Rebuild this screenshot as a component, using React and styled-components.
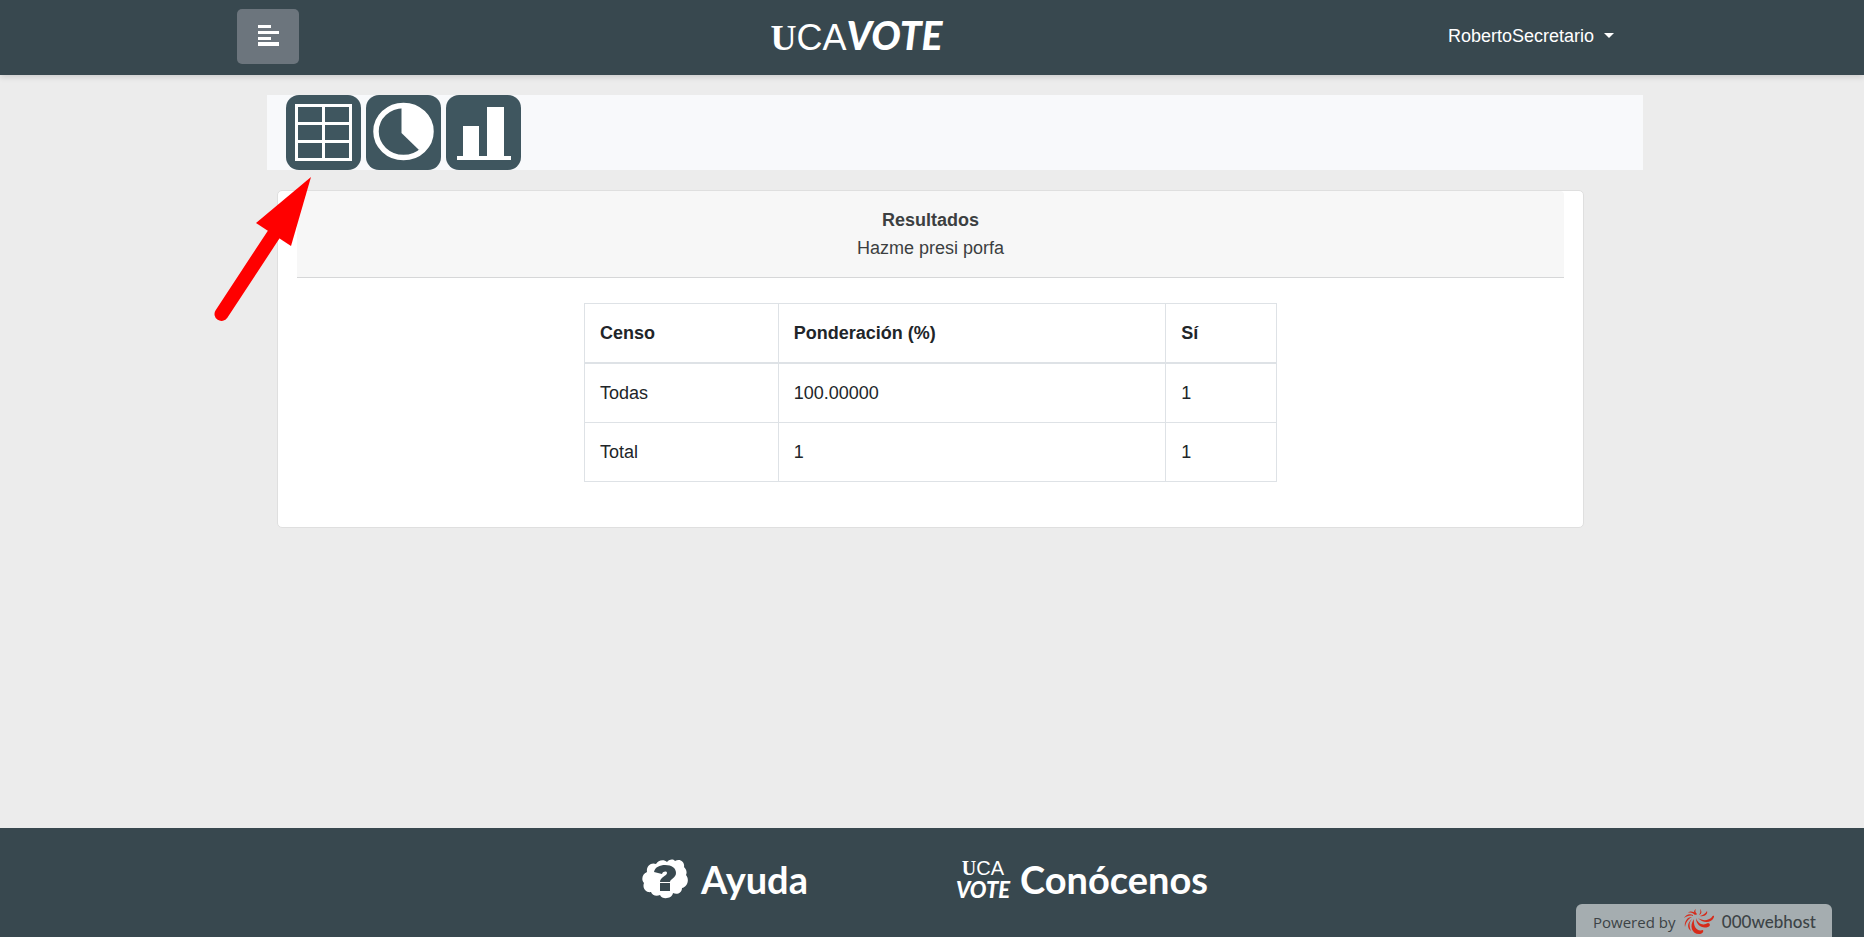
import React from "react";
import styled, { createGlobalStyle } from "styled-components";

const GlobalStyle = createGlobalStyle`
  *, *::before, *::after { box-sizing: border-box; }
  body {
    margin: 0;
    background: #ececec;
    color: #212529;
    font-family: "Liberation Sans", Arial, sans-serif;
    font-size: 18px;
    line-height: 28px;
  }
`;

const Page = styled.div`
  display: flex;
  flex-direction: column;
  min-height: 100vh;
  position: relative;
`;

const Header = styled.header`
  display: flex;
  align-items: center;
  justify-content: space-between;
  height: 75px;
  padding: 0 250px 0 237px;
  background: #38484f;
  box-shadow: 0 2px 6px rgba(0, 0, 0, 0.14);

  @media (max-width: 1200px) {
    padding: 0 24px;
  }
`;

const MenuButton = styled.button`
  display: flex;
  align-items: center;
  justify-content: center;
  width: 62px;
  height: 55px;
  margin-bottom: 2px;
  padding: 0 0 2px;
  border: 0;
  border-radius: 5px;
  background: #6c757d;
  color: #fff;
  cursor: pointer;
`;

const Brand = styled.a`
  display: flex;
  align-items: baseline;
  height: 44px;
  line-height: 44px;
  margin: 0 34px 6px 0;
  color: #fff;
  text-decoration: none;
`;

const SerifLetter = styled.span`
  font-family: "Liberation Serif", serif;
  font-size: ${(p) => p.$size}px;
  font-weight: 700;
`;

const ThinLetters = styled.span`
  font-family: "Liberation Sans", sans-serif;
  font-size: ${(p) => p.$size}px;
`;

const BrushLetters = styled.span`
  font-family: Lato, sans-serif;
  font-size: ${(p) => p.$size}px;
  font-style: italic;
  font-weight: 900;
`;

const UserMenu = styled.button`
  display: flex;
  align-items: center;
  gap: 10px;
  margin-bottom: 4px;
  padding: 0;
  border: 0;
  background: none;
  color: #fff;
  font: inherit;
  cursor: pointer;
`;

const Caret = styled.span`
  border: 5px solid transparent;
  border-top-color: #fff;
  border-bottom: 0;
`;

const Main = styled.main`
  flex: 1;
  padding: 20px 221px 40px 267px;

  @media (max-width: 1200px) {
    padding: 20px 24px 40px;
  }
`;

const ViewBar = styled.nav`
  display: flex;
  gap: 5px;
  padding-left: 19px;
  background: #f8f9fb;
`;

const ViewButton = styled.button`
  width: 75px;
  height: 75px;
  padding: 0;
  border: 0;
  border-radius: 13px;
  background: #3f565f;
  color: #fff;
  cursor: pointer;

  svg { display: block; }
`;

const Card = styled.section`
  margin: 20px 59px 0 10px;
  padding: 0 19px 45px;
  border: 1px solid #dfdfdf;
  border-radius: 5px;
  background: #fff;
`;

const CardHeader = styled.div`
  padding: 15px;
  border-bottom: 1px solid #d6d7d8;
  border-radius: 4px 4px 0 0;
  background: #f7f7f7;
  color: #3c3f41;
  text-align: center;
`;

const Title = styled.h1`
  margin: 0;
  font: inherit;
  font-weight: 700;
`;

const Subtitle = styled.p`
  margin: 0;
`;

const ResultsTable = styled.table`
  width: 693px;
  max-width: 100%;
  margin: 25px auto 0;
  border-collapse: collapse;
`;

const Column = styled.col`
  width: ${(p) => p.$share}%;
`;

const HeadCell = styled.th`
  padding: 15px;
  border: 1px solid #dee2e6;
  border-bottom-width: 2px;
  text-align: left;
`;

const Cell = styled.td`
  padding: 15px;
  border: 1px solid #dee2e6;
`;

const Footer = styled.footer`
  display: flex;
  flex-wrap: wrap;
  justify-content: center;
  gap: 0 147px;
  min-height: 109px;
  padding: 29px 14px 36px 0;
  background: #38484f;
`;

const FooterLink = styled.a`
  display: flex;
  align-items: center;
  gap: ${(p) => p.$gap}px;
  height: 44px;
  color: #fff;
  font-family: Lato, sans-serif;
  font-size: 38px;
  font-weight: 700;
  line-height: 44px;
  text-decoration: none;
`;

const StackedLogo = styled.span`
  display: flex;
  flex-direction: column;
  align-items: center;
  width: 56px;
  font-size: 20px;
  font-weight: 400;
`;

const LogoLine = styled.span`
  display: flex;
  align-items: baseline;
  height: 22px;
  line-height: 22px;
`;

const HostBadge = styled.a`
  position: fixed;
  right: 32px;
  bottom: 0;
  display: flex;
  align-items: center;
  justify-content: space-between;
  width: 256px;
  height: 33px;
  padding: 3px 16px 0 17px;
  border-radius: 6px 6px 0 0;
  background: #a5adb0;
  color: #3c4346;
  font-family: "Open Sans", sans-serif;
  font-size: 15px;
  line-height: 24px;
  text-decoration: none;
  white-space: nowrap;
`;

const HostName = styled.span`
  font-family: Lato, sans-serif;
  font-size: 17px;
  font-weight: 500;
`;

const Pointer = styled.svg`
  position: absolute;
  left: 210px;
  top: 172px;
  pointer-events: none;
`;

const MenuIcon = () => (
  <svg width="21" height="21" viewBox="0 0 21 21" fill="currentColor" aria-hidden="true">
    <path d="M0 0h13v3H0zM0 6h21v3H0zM0 12h13v3H0zM0 17h21v4H0z" />
  </svg>
);

const TableIcon = () => (
  <svg width="75" height="75" viewBox="0 0 75 75" fill="none" stroke="currentColor" strokeWidth="3" aria-hidden="true">
    <path d="M10.5 10.5h54v54h-54zM37.500 10v55M10 28.500h55M10 46.500h55" />
  </svg>
);

const PieIcon = () => (
  <svg width="75" height="75" viewBox="0 0 75 75" aria-hidden="true">
    <ellipse cx="37.500" cy="36.500" rx="27.500" ry="26" fill="none" stroke="currentColor" strokeWidth="5.500" />
    <path d="M35.500 9V38L53 55C63 50 67 43 67 36C67 20 53 8 35.500 9Z" fill="currentColor" />
  </svg>
);

const BarsIcon = () => (
  <svg width="75" height="75" viewBox="0 0 75 75" fill="currentColor" aria-hidden="true">
    <path d="M11 61h54v4H11zM17 31h16v31H17zM41 12h17v50H41z" />
  </svg>
);

const HelpIcon = () => (
  <svg width="46" height="40" viewBox="0 0 46 40" aria-hidden="true">
    <path
      fill="#fff"
      d="M5 13C4 7 9 3 14 5C16 1 22 0 25 3C28 0 31 0 33 2C38-1 43 3 42 8C45 11 45 14 44 16C48 21 45 28 40 29C40 34 35 36 31 34C30 40 20 41 18 36C14 38 10 36 9 33C4 34 0 29 2 24C-1 21 0 15 5 13Z"
    />
    <path
      fill="#38484f"
      d="M12 13C13 8 18 6 23 6C30 6 34 9 34 14C34 19 28 20 28 23H18C18 18 25 17 25 14C25 12 21 12 20 15ZM18 24H28V32H18Z"
    />
  </svg>
);

const HostIcon = () => (
  <svg width="30" height="26" viewBox="0 0 30 26" fill="#d62b1a" aria-hidden="true">
    <path d="M10 10C5 17 8 25 15 25C18 25 20 23 19 21C13 23 9 18 10 10Z" />
    <path d="M12 9C12 16 18 20 24 18C27 17 26 14 24 14C19 17 14 15 12 9Z" />
    <path d="M14 9C19 15 28 14 30 8C31 7 29 6 28 8C24 12 19 12 14 9Z" />
    <path d="M16 7C21 8 24 5 23 2C21 5 19 6 16 7Z" />
    <path d="M15 6C18 5 18 2 16 0C17 3 16 4 15 6Z" />
    <path d="M8 10C3 14 3 19 7 22C5 17 5 13 8 10Z" />
    <path d="M8 8C3 8 0 13 1 18C2 13 4 10 8 8Z" />
    <path d="M9 6C5 4 2 6 0 9C3 7 6 6 9 7Z" />
    <path d="M12 5C9 2 6 2 4 4C7 3 9 4 11 6Z" />
    <path d="M13 5C11 3 11 2 12 0C9 2 10 4 12 6Z" />
  </svg>
);

const views = [
  { label: "Tabla", Icon: TableIcon },
  { label: "Gráfico circular", Icon: PieIcon },
  { label: "Gráfico de barras", Icon: BarsIcon },
];

const rows = [
  ["Todas", "100.00000", "1"],
  ["Total", "1", "1"],
];

export default function App() {
  return (
    <>
      <GlobalStyle />
      <Page>
        <Header>
          <MenuButton type="button" aria-label="Menú">
            <MenuIcon />
          </MenuButton>
          <Brand href="#">
            <SerifLetter $size={36}>U</SerifLetter>
            <ThinLetters $size={36}>CA</ThinLetters>
            <BrushLetters $size={39}>VOTE</BrushLetters>
          </Brand>
          <UserMenu type="button">
            RobertoSecretario
            <Caret />
          </UserMenu>
        </Header>

        <Main>
          <ViewBar>
            {views.map(({ label, Icon }) => (
              <ViewButton type="button" key={label} aria-label={label}>
                <Icon />
              </ViewButton>
            ))}
          </ViewBar>

          <Card>
            <CardHeader>
              <Title>Resultados</Title>
              <Subtitle>Hazme presi porfa</Subtitle>
            </CardHeader>
            <ResultsTable>
              <colgroup>
                <Column $share={28} />
                <Column $share={56} />
                <Column $share={16} />
              </colgroup>
              <thead>
                <tr>
                  <HeadCell scope="col">Censo</HeadCell>
                  <HeadCell scope="col">Ponderación (%)</HeadCell>
                  <HeadCell scope="col">Sí</HeadCell>
                </tr>
              </thead>
              <tbody>
                {rows.map((row) => (
                  <tr key={row[0]}>
                    {row.map((value, i) => (
                      <Cell key={i}>{value}</Cell>
                    ))}
                  </tr>
                ))}
              </tbody>
            </ResultsTable>
          </Card>
        </Main>

        <Footer>
          <FooterLink href="#ayuda" $gap={13}>
            <HelpIcon />
            Ayuda
          </FooterLink>
          <FooterLink href="#conocenos" $gap={9}>
            <StackedLogo>
              <LogoLine>
                <SerifLetter $size={20}>U</SerifLetter>
                <ThinLetters $size={20}>CA</ThinLetters>
              </LogoLine>
              <LogoLine>
                <BrushLetters $size={22}>VOTE</BrushLetters>
              </LogoLine>
            </StackedLogo>
            Conócenos
          </FooterLink>
        </Footer>

        <Pointer width="110" height="160" viewBox="0 0 110 160" aria-hidden="true">
          <path d="M11.500 142L66 59" stroke="#f00" strokeWidth="14" strokeLinecap="round" />
          <path d="M101 5L46 51L81 74Z" fill="#f00" />
        </Pointer>
      </Page>

      <HostBadge href="#host">
        Powered by
        <HostIcon />
        <HostName>000webhost</HostName>
      </HostBadge>
    </>
  );
}
